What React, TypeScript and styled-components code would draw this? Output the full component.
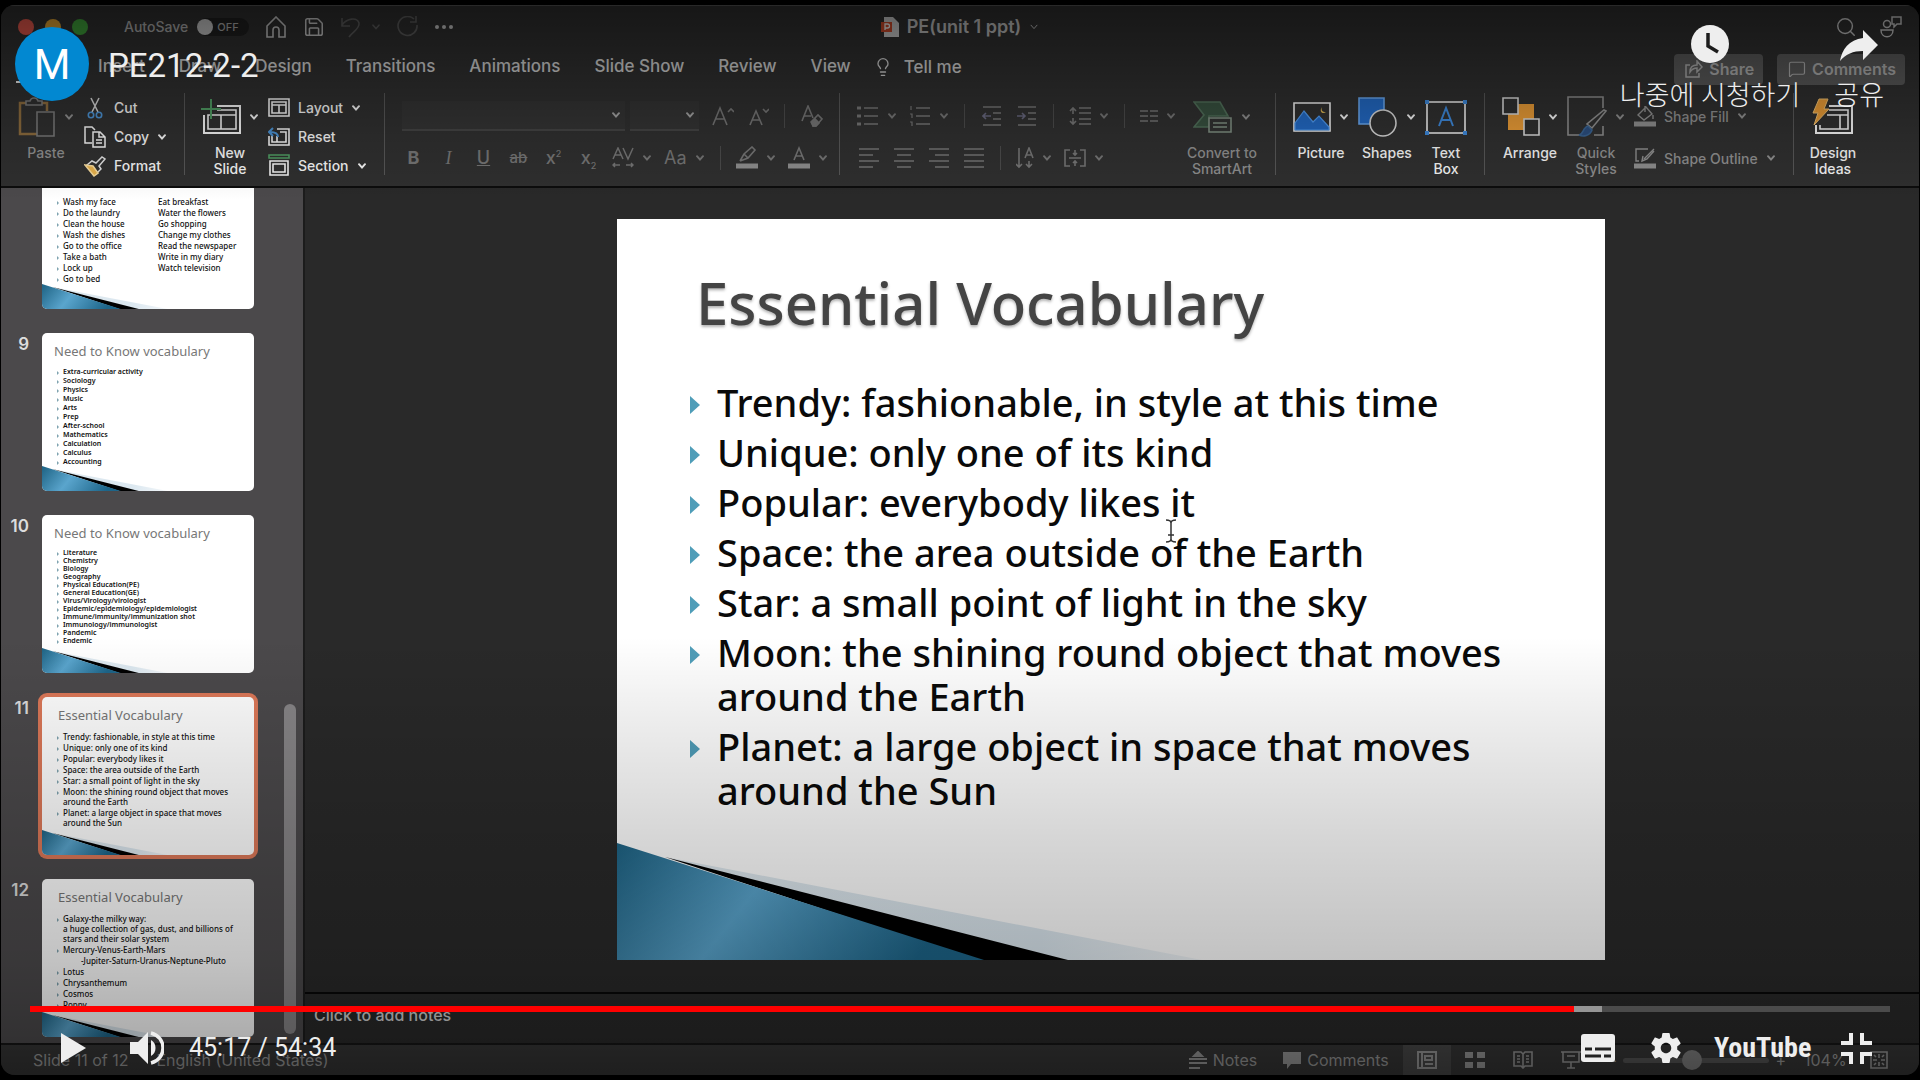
import React from "react";
import styled, { createGlobalStyle, css } from "styled-components";
import { Lightbulb, Search, MessageSquare, Save } from "lucide-react";

const UI = `Inter, "Liberation Sans", sans-serif`;
const SLIDE = `"Noto Sans", "Open Sans", sans-serif`;
const PLAYER = `Roboto, "Noto Sans CJK KR", sans-serif`;

const GlobalStyle = createGlobalStyle`
  *, *::before, *::after { box-sizing: border-box; }
  body { margin: 0; background: #000; font-family: ${UI}; }
  button, input, select, textarea { font: inherit; color: inherit; margin: 0; }
  button { background: none; border: 0; padding: 0; cursor: pointer; }
  ul, ol, h1, h2, p { margin: 0; padding: 0; list-style: none; font-weight: 400; }
  svg { display: block; flex: none; }
`;

const Player = styled.main`
  position: relative;
  height: 100vh;
  min-height: 720px;
  padding: 5px 1px;
  overflow: hidden;
  background: #000;
`;

const AppWindow = styled.div`
  display: flex;
  flex-direction: column;
  height: 100%;
  border-radius: 14px;
  overflow: hidden;
  background: #303030;
  color: #f0f0f0;
`;

/* ---------- title bar ---------- */

const TitleBar = styled.header`
  display: grid;
  grid-template-columns: 1fr auto 1fr;
  align-items: center;
  flex: none;
  height: 43px;
  border-top: 1px solid #555;
  background: #2f2f2f;
`;

const TitleSide = styled.div<{ $end?: boolean }>`
  display: flex;
  align-items: center;
  gap: ${(p) => (p.$end ? 22 : 16)}px;
  padding: ${(p) => (p.$end ? "0 16px 0 0" : "0 0 0 17px")};
  justify-content: ${(p) => (p.$end ? "flex-end" : "flex-start")};
  color: #c4c4c4;
`;

const Lights = styled.div`
  display: flex;
  gap: 11px;
  margin-right: 20px;
`;

const Light = styled.button<{ $c: string }>`
  width: 16px;
  height: 16px;
  border-radius: 50%;
  background: ${(p) => p.$c};
`;

const AutoSave = styled.label`
  display: flex;
  align-items: center;
  gap: 9px;
  font-size: 14px;
  font-weight: 500;
  line-height: 18px;
  color: #a8a8a8;
`;

const Switch = styled.span`
  position: relative;
  display: flex;
  align-items: center;
  width: 52px;
  height: 18px;
  border-radius: 9px;
  background: #1f1f1f;
  font-size: 11px;
  padding-left: 20px;
  input { position: absolute; inset: 0; opacity: 0; }
  &::before {
    content: "";
    position: absolute;
    left: 0;
    width: 16px;
    height: 16px;
    border-radius: 50%;
    background: #c4c4c4;
  }
`;

const IconButton = styled.button<{ $dim?: boolean }>`
  display: flex;
  align-items: center;
  gap: 10px;
  color: ${(p) => (p.$dim ? "#5a5a5a" : "inherit")};
`;

const DocTitle = styled.h1`
  display: flex;
  align-items: center;
  gap: 8px;
  font-size: 18px;
  line-height: 20px;
  font-weight: 600;
  color: #bcbcbc;
`;

/* ---------- tabs ---------- */

const TabBar = styled.nav`
  display: flex;
  align-items: center;
  flex: none;
  height: 41px;
  padding: 0 14px 3px 15px;
  gap: 34px;
  background: #2f2f2f;
`;

const Tab = styled.a<{ $active?: boolean }>`
  font-size: 17px;
  line-height: 30px;
  font-weight: 500;
  color: #d0d0d0;
  text-decoration: none;
  white-space: nowrap;
  border-bottom: 2px solid ${(p) => (p.$active ? "#e8e8e8" : "transparent")};
`;

const TellMe = styled.button`
  display: flex;
  align-items: center;
  gap: 11px;
  margin-left: -12px;
  font-size: 17px;
  line-height: 30px;
  font-weight: 500;
  color: #d0d0d0;
`;

const TabActions = styled.div`
  display: flex;
  gap: 14px;
  margin-left: auto;
  padding-top: 4px;
`;

const ActionButton = styled.button`
  display: flex;
  align-items: center;
  gap: 6px;
  height: 31px;
  padding: 0 9px 0 11px;
  border-radius: 4px;
  background: #585858;
  color: #acacac;
  font-size: 16px;
  font-weight: 600;
`;

/* ---------- ribbon ---------- */

const Ribbon = styled.section`
  display: flex;
  flex: none;
  height: 97px;
  padding-top: 4px;
  background: #2f2f2f;
`;

const Group = styled.div<{ $w?: number; $gap?: number }>`
  position: relative;
  display: flex;
  flex: none;
  gap: ${(p) => p.$gap ?? 10}px;
  width: ${(p) => (p.$w ? p.$w + "px" : "auto")};
  padding-left: 17px;
  &:not(:last-child)::after {
    content: "";
    position: absolute;
    right: 0;
    top: 0;
    width: 1px;
    height: 82px;
    background: #565656;
  }
`;

const tone = css<{ $dim?: boolean }>`
  color: ${(p) => (p.$dim ? "#8c8c8c" : "#f2f2f2")};
`;

const Big = styled.button<{ $dim?: boolean; $w?: number }>`
  ${tone}
  display: flex;
  flex-direction: column;
  align-items: center;
  align-self: flex-start;
  width: ${(p) => p.$w ?? 56}px;
  font-size: 14px;
  line-height: 16px;
  font-weight: 500;
  text-align: center;
`;

const BigIcon = styled.span`
  display: flex;
  align-items: center;
  gap: 8px;
  height: 48px;
  margin-bottom: 4px;
`;

const SmallColumn = styled.div`
  display: flex;
  flex-direction: column;
`;

const Small = styled.button<{ $dim?: boolean; $tall?: boolean }>`
  ${tone}
  display: flex;
  align-items: center;
  gap: 8px;
  height: ${(p) => (p.$tall ? 42 : 29)}px;
  font-size: 14px;
  font-weight: 500;
  white-space: nowrap;
`;

const SmallIcon = styled.span`
  display: flex;
  justify-content: center;
  width: 22px;
`;

const Rows = styled.div<{ $w?: number }>`
  display: flex;
  flex-direction: column;
  flex: none;
  width: ${(p) => (p.$w ? p.$w + "px" : "auto")};
  padding-top: 2px;
`;

const Row = styled.div`
  display: flex;
  align-items: center;
  gap: 12px;
  height: 42px;
`;

const Tool = styled.button`
  display: flex;
  align-items: center;
  justify-content: center;
  gap: 8px;
  min-width: 23px;
  color: #737373;
  font-size: 18px;
  line-height: 22px;
`;

const Glyph = styled.span<{ $v?: "b" | "i" | "u" | "s" }>`
  font-weight: ${(p) => (p.$v === "b" ? 700 : 500)};
  font-style: ${(p) => (p.$v === "i" ? "italic" : "normal")};
  font-family: ${(p) => (p.$v === "i" ? `"Liberation Serif", serif` : UI)};
  text-decoration: ${(p) => (p.$v === "u" ? "underline" : p.$v === "s" ? "line-through" : "none")};
  font-size: ${(p) => (p.$v === "s" ? 15 : 18)}px;
  sup, sub { font-size: 9px; line-height: 0; }
`;

const Sep = styled.span`
  flex: none;
  width: 1px;
  height: 24px;
  margin: 0 3px;
  background: #4a4a4a;
`;

const Pickers = styled.div`
  display: flex;
  gap: 5px;
`;

const Picker = styled.label<{ $w: number }>`
  display: grid;
  align-items: center;
  width: ${(p) => p.$w}px;
  height: 30px;
  background: #333;
  border-bottom: 2px solid #434343;
  select {
    grid-area: 1 / 1;
    appearance: none;
    width: 100%;
    height: 100%;
    border: 0;
    background: transparent;
  }
  svg { grid-area: 1 / 1; justify-self: end; margin-right: 4px; color: #a0a0a0; }
`;

/* ---------- workspace ---------- */

const Workspace = styled.div`
  display: flex;
  flex: 1;
  min-height: 0;
  border-top: 2px solid #0c0c0c;
`;

const Rail = styled.aside`
  position: relative;
  display: flex;
  flex-direction: column;
  justify-content: flex-end;
  gap: 24px;
  flex: none;
  width: 302px;
  padding-bottom: 6px;
  overflow: hidden;
  background: #4b494b;
`;

const RailScroll = styled.span`
  position: absolute;
  right: 7px;
  bottom: 9px;
  width: 12px;
  height: 330px;
  border-radius: 6px;
  background: #878587;
`;

const RailItem = styled.div`
  display: flex;
  flex: none;
`;

const RailNumber = styled.span`
  width: 41px;
  padding-right: 13px;
  text-align: right;
  font-size: 17px;
  line-height: 22px;
  font-weight: 600;
  color: #dcdcdc;
`;

const Thumb = styled.button<{ $on?: boolean }>`
  position: relative;
  display: flex;
  flex-direction: column;
  justify-content: flex-start;
  width: 212px;
  height: 158px;
  border-radius: 5px;
  overflow: hidden;
  background: #fff;
  color: #111;
  text-align: left;
  font-family: ${SLIDE};
  ${(p) => p.$on && "box-shadow: 0 0 0 4px #dc7858;"}
`;

const ThumbTitle = styled.span<{ $in?: boolean }>`
  position: relative;
  padding: 9px 0 0 ${(p) => (p.$in ? 16 : 12)}px;
  height: 34px;
  font-size: 13px;
  line-height: 18px;
  color: #777;
`;

const ThumbList = styled.span<{ $lh: number; $fs: number; $top?: number }>`
  position: relative;
  display: grid;
  align-content: start;
  padding: ${(p) => p.$top ?? 0}px 0 0 15px;
  font-size: ${(p) => p.$fs}px;
  line-height: ${(p) => p.$lh}px;
  font-weight: ${(p) => (p.$fs === 7 ? 600 : 500)};
`;

const ThumbLine = styled.span<{ $kind?: "cont" | "deep"; $cols?: boolean }>`
  display: ${(p) => (p.$cols ? "grid" : "block")};
  grid-template-columns: 95px 1fr;
  position: relative;
  padding-left: ${(p) => (p.$kind === "deep" ? 24 : 6)}px;
  margin-top: ${(p) => (p.$kind === "cont" ? -1 : 0)}px;
  white-space: nowrap;
  ${(p) =>
    !p.$kind &&
    css`
      &::before {
        content: "";
        position: absolute;
        left: 0;
        top: calc(50% - 1px);
        border: solid transparent;
        border-width: 2px 0 2px 2px;
        border-left-color: #7fa3b0;
      }
    `}
`;

const Main = styled.div`
  display: flex;
  flex-direction: column;
  flex: 1;
  min-width: 0;
  border-left: 2px solid #1c1c1c;
  background: #292929;
`;

const Stage = styled.div`
  display: flex;
  flex: 1;
  min-height: 0;
  align-items: center;
  justify-content: center;
  padding: 31px 2px 32px 0;
`;

const Slide = styled.article`
  position: relative;
  height: 100%;
  aspect-ratio: 4 / 3;
  padding: 48px 60px 0 79px;
  background: #fff;
  color: #0a0a0a;
  font-family: ${SLIDE};
`;

const Theme = styled.svg`
  position: absolute;
  inset: 0;
  width: 100%;
  height: 100%;
  pointer-events: none;
`;

const SlideTitle = styled.h2`
  position: relative;
  font-size: 58px;
  line-height: 72px;
  font-weight: 500;
  color: #444;
  text-shadow: 0 2px 3px rgba(0, 0, 0, 0.3);
`;

const Bullets = styled.ul`
  position: relative;
  display: grid;
  gap: 6px;
  margin: 41px 0 0 -6px;
`;

const Bullet = styled.li`
  position: relative;
  padding-left: 27px;
  font-size: 38px;
  line-height: 44px;
  font-weight: 500;
  white-space: pre-line;
  &::before {
    content: "";
    position: absolute;
    left: 0;
    top: 16px;
    border: solid transparent;
    border-width: 9px 0 9px 10px;
    border-left-color: #4f9db8;
  }
`;

const Notes = styled.textarea`
  flex: none;
  height: 51px;
  padding: 11px 9px;
  border: 0;
  border-top: 2px solid #080808;
  resize: none;
  overflow: hidden;
  background: #292929;
  font-size: 16px;
  line-height: 20px;
  font-weight: 500;
  &::placeholder { color: #d0d0d0; opacity: 1; }
`;

/* ---------- status bar ---------- */

const StatusBar = styled.footer`
  display: flex;
  align-items: center;
  flex: none;
  height: 32px;
  padding: 0 31px 0 32px;
  border-top: 2px solid #161616;
  background: #363636;
  color: #989898;
  font-size: 16px;
`;

const StatusText = styled.span`
  margin-right: 28px;
`;

const StatusTools = styled.div`
  display: flex;
  align-items: center;
  align-self: stretch;
  margin-left: auto;
`;

const StatusButton = styled.button`
  display: flex;
  align-items: center;
  gap: 6px;
  margin-right: 14px;
  & + & { margin-left: 12px; }
`;

const ViewButton = styled.button<{ $on?: boolean }>`
  display: flex;
  align-items: center;
  justify-content: center;
  align-self: stretch;
  width: 48px;
  background: ${(p) => (p.$on ? "#484848" : "transparent")};
`;

const Zoom = styled.label`
  display: flex;
  align-items: center;
  gap: 6px;
  margin: 0 26px 0 12px;
  input {
    appearance: none;
    width: 146px;
    height: 21px;
    background: transparent;
  }
  input::-webkit-slider-runnable-track {
    height: 5px;
    border-radius: 3px;
    background: #555;
  }
  input::-webkit-slider-thumb {
    appearance: none;
    width: 20px;
    height: 20px;
    margin-top: -8px;
    border-radius: 50%;
    background: #808080;
  }
  output { width: 40px; margin-left: 12px; }
`;

/* ---------- video player overlay ---------- */

const Shade = styled.div<{ $bottom?: boolean }>`
  position: absolute;
  left: 0;
  right: 0;
  pointer-events: none;
  ${(p) =>
    p.$bottom
      ? "bottom: 0; height: 41vh; background: linear-gradient(rgba(0,0,0,0), rgba(0,0,0,.06) 15%, rgba(0,0,0,.16) 45%, rgba(0,0,0,.24) 73%, rgba(0,0,0,.32) 90%, rgba(0,0,0,.45));"
      : "top: 0; height: 200px; background: linear-gradient(rgba(0,0,0,.54), rgba(0,0,0,.32) 35%, rgba(0,0,0,.12) 70%, rgba(0,0,0,0));"}
`;

const TopOverlay = styled.div`
  position: absolute;
  top: 24px;
  left: 15px;
  right: 36px;
  display: flex;
  color: #eee;
  font-family: ${PLAYER};
`;

const Channel = styled.a`
  display: flex;
  align-items: center;
  justify-content: center;
  width: 74px;
  height: 74px;
  margin-top: 3px;
  border-radius: 50%;
  background: #0288d1;
  color: #fff;
  font-size: 42px;
  text-decoration: none;
`;

const VideoTitle = styled.a`
  margin: 22px auto 0 19px;
  font-size: 33px;
  line-height: 40px;
  color: #eee;
  text-decoration: none;
`;

const TopButton = styled.button`
  display: flex;
  flex-direction: column;
  align-items: center;
  margin-left: 34px;
  font-size: 27px;
  line-height: 30px;
  font-weight: 300;
  gap: 17px;
`;

const BottomOverlay = styled.div`
  position: absolute;
  left: 30px;
  right: 30px;
  bottom: 9px;
  color: #eee;
  font-family: ${PLAYER};
`;

const Progress = styled.input`
  display: block;
  appearance: none;
  width: 100%;
  height: 6px;
  background: linear-gradient(90deg, #f00 83%, #959595 83% 84.5%, #4b4b4b 84.5%);
  &::-webkit-slider-thumb { appearance: none; width: 0; height: 0; }
`;

const Controls = styled.div`
  display: flex;
  align-items: center;
  height: 60px;
  margin-top: 6px;
  padding: 0 18px 0 31px;
  margin-bottom: -7px;
`;

const Control = styled.button<{ $mr: number }>`
  margin-right: ${(p) => p.$mr}px;
`;

const Time = styled.span`
  margin-right: auto;
  font-size: 25px;
  line-height: 30px;
`;

const Wordmark = styled.a`
  width: 96px;
  margin-right: 31px;
  font-family: "Roboto Condensed", "Liberation Sans Narrow", "DejaVu Sans Condensed", sans-serif;
  font-size: 28px;
  line-height: 32px;
  font-weight: 700;
  color: #eee;
  text-decoration: none;
`;

/* ---------- drawings ---------- */

const Chevron = ({ w = 2 }: { w?: number }) => (
  <svg width="10" height="8" viewBox="0 0 10 8" fill="none" stroke="currentColor" strokeWidth={w} strokeLinecap="round">
    <path d="M2 2.2 5 5.6 8 2.2" />
  </svg>
);

type IconProps = { w: number; h: number; sw?: number; children: React.ReactNode };
const Icon = ({ w, h, sw = 1.6, children }: IconProps) => (
  <svg width={w} height={h} viewBox={`0 0 ${w} ${h}`} fill="none" stroke="currentColor" strokeWidth={sw}>
    {children}
  </svg>
);

const SlideArt = () => (
  <Theme viewBox="0 0 988 741" preserveAspectRatio="none">
    <defs>
      <linearGradient id="wave" x1="0" y1="0" x2="1" y2="0.25">
        <stop offset="0" stopColor="#1d6283" />
        <stop offset="0.45" stopColor="#5aa5cd" />
        <stop offset="1" stopColor="#1d6589" />
      </linearGradient>
      <linearGradient id="haze" x1="0" y1="0" x2="1" y2="0">
        <stop offset="0" stopColor="#dfe9ef" />
        <stop offset="0.7" stopColor="#dce8f0" />
        <stop offset="1" stopColor="#f2f6f9" />
      </linearGradient>
    </defs>
    <path d="M48 638 585 741H440Z" fill="url(#haze)" />
    <path d="M48 638 451 741H360Z" fill="#000" />
    <path d="M0 624 367 741H0Z" fill="url(#wave)" />
  </Theme>
);

const PasteIcon = () => (
  <Icon w={38} h={42}>
    <path d="M8 7H2v31h17M24 7h5v8" stroke="#8a6a3c" strokeWidth="2.5" />
    <path d="M8 9V5h4c1-4 7-4 8 0h4v4Z" stroke="#777" />
    <path d="M19 16h17v24H19Z" stroke="#777" />
  </Icon>
);
const CutIcon = () => (
  <Icon w={16} h={22}>
    <path d="M4 1 11 15M12 1 5 15" stroke="#ccc" />
    <circle cx="4" cy="18" r="2.7" stroke="#4a90d0" />
    <circle cx="12" cy="18" r="2.7" stroke="#4a90d0" />
  </Icon>
);
const CopyIcon = () => (
  <Icon w={22} h={22} sw={1.5}>
    <path d="M8 17H1V1h7l3 3M9 6h7l5 5v10H9ZM15 6v5h6M12 14h6M12 17h6" />
  </Icon>
);
const FormatIcon = () => (
  <Icon w={22} h={22} sw={1.5}>
    <path d="m12 8 6-6 3 2-6 7 2 3-5 5-9-9 5-4Z" stroke="#ddd" />
    <path d="m1 10 8 1 5 7-4 3Z" fill="#e5b04c" stroke="#f3d89b" />
  </Icon>
);
const NewSlideIcon = () => (
  <Icon w={40} h={38}>
    <path d="M16 8h23v27H3V17" strokeWidth="2" />
    <path d="M16 12h19v19H7V17h28M20 17v14" />
    <path d="M10 1v20M0 11h20" stroke="#4f9a62" strokeWidth="2" />
  </Icon>
);
const LayoutIcon = () => (
  <Icon w={22} h={20}>
    <path d="M1 1h20v17H1ZM4 4h14v11H4ZM4 7h14M11 7v8" />
  </Icon>
);
const ResetIcon = () => (
  <Icon w={22} h={20}>
    <path d="M9 2h12v16H1V9M12 5h6v10H4V9M9 9v6h9" />
    <path d="M10 10c0-4-3-5-8-5m3-4L1 5l4 4" stroke="#4a90d0" strokeWidth="2" />
  </Icon>
);
const SectionIcon = () => (
  <Icon w={22} h={23}>
    <path d="M1 1h20v3H1Z" stroke="#4f9a62" />
    <path d="M2 7h18v14H2ZM5 10h12v8H5Z" />
  </Icon>
);
const ListIcon = ({ num }: { num?: boolean }) => (
  <Icon w={22} h={20} sw={1.7}>
    <path d="M7 2h14M7 10h14M7 18h14" />
    <path d={num ? "M2 0v4M1 8h2v4M1 16h2v4" : "M0 2h4M0 10h4M0 18h4"} strokeWidth={num ? 1.2 : 3} />
  </Icon>
);
const IndentIcon = ({ out }: { out?: boolean }) => (
  <Icon w={20} h={20} sw={1.6}>
    <path d="M1 1h18M11 7h8M11 13h8M1 19h18" />
    <path d={out ? "M9 10H1m3-3-3 3 3 3" : "M0 10h8M5 7l3 3-3 3"} stroke="#66667c" />
  </Icon>
);
const SpacingIcon = () => (
  <Icon w={22} h={20}>
    <path d="M10 2h12M10 7h12M10 13h12M10 18h12M4 2v6M1 5l3-3 3 3M4 12v6M1 15l3 3 3-3" />
  </Icon>
);
const ColumnsIcon = () => (
  <Icon w={18} h={14} sw={1.4}>
    <path d="M0 2h8M0 7h8M0 12h8M10 2h8M10 7h8M10 12h8" />
  </Icon>
);
const AlignIcon = ({ d }: { d: string }) => (
  <Icon w={20} h={20} sw={1.7}>
    <path d={d} />
  </Icon>
);
const TextDirIcon = () => (
  <Icon w={18} h={22}>
    <path d="M3 1v19M0 17l3 3 3-3M13 14v6M10 17l3 3 3-3M9 11l4-10 4 10M10 8h6" />
  </Icon>
);
const AlignTextIcon = () => (
  <Icon w={22} h={18}>
    <path d="M6 1H1v16h5M16 1h5v16h-5M5 9h12M11 1v5M9 4l2 2 2-2M11 17v-5M9 14l2-2 2 2" />
  </Icon>
);
const SpacingAV = () => (
  <Icon w={22} h={22} sw={1.5}>
    <path d="M1 12 6 1l5 11M3 8h6M11 1l5 11 5-11M1 18h7M3 16l-2 2 2 2M14 18h7M19 16l2 2-2 2" />
  </Icon>
);
const InkIcon = ({ letter }: { letter?: boolean }) => (
  <Icon w={22} h={24}>
    {letter ? <path d="m6 14 5-12 5 12M8 10h6" /> : <path d="M4 15 8 8l8-7 3 3-7 8-8 3M8 8l4 4" />}
    <path d="M0 20h22" stroke="#8c8c8c" strokeWidth="5" />
  </Icon>
);
const SizeIcon = ({ up }: { up?: boolean }) => (
  <Icon w={22} h={20}>
    <path d={up ? "M1 19 8 2l7 17M4 13h8M16 6l3-3 3 3" : "M3 19 9 5l6 14M5 14h8M16 3l3 3 3-3"} />
  </Icon>
);
const ClearIcon = () => (
  <Icon w={22} h={22}>
    <path d="M1 16 7 1l5 12M3 11h7M10 17l7-7 4 4-6 7h-3Z" />
    <path d="m11 17 3-3 4 4-3 3h-3Z" fill="currentColor" />
  </Icon>
);
const SmartArtIcon = () => (
  <Icon w={40} h={32}>
    <path d="M1 1h26l8 14H16v11H1l10-12Z" fill="#37503f" stroke="#4f6d58" />
    <path d="M16 17h22v14H16Z" fill="#303030" stroke="#7d8d80" />
    <path d="M20 22h14M20 26h14" stroke="#7d8d80" />
  </Icon>
);
const PictureIcon = () => (
  <Icon w={38} h={30}>
    <path d="M1 1h36v28H1Z" />
    <path d="m2 21 9-12 9 11 6-6 10 11v3H2Z" fill="#2268c2" stroke="#4d97ec" strokeWidth="1.2" />
    <path d="M29 5c-1 3 0 5 4 5-4 3-7-1-4-5Z" fill="#d7b252" stroke="none" />
  </Icon>
);
const ShapesIcon = () => (
  <Icon w={40} h={40}>
    <path d="M1 1h25v26H1Z" fill="#2268c2" stroke="#68a5ec" />
    <circle cx="25" cy="26" r="13" fill="#303030" stroke="#d4d4d4" />
  </Icon>
);
const TextBoxIcon = () => (
  <Icon w={42} h={36}>
    <path d="M2 3h38v31H2Z" />
    <path d="m14 27 7-18 7 18M16 21h10" stroke="#3d87d8" strokeWidth="2" />
    <path d="M0 1h4v4H0ZM38 1h4v4h-4ZM0 32h4v4H0ZM38 32h4v4h-4Z" fill="#3d87d8" stroke="none" />
  </Icon>
);
const ArrangeIcon = () => (
  <Icon w={38} h={40}>
    <path d="M6 7h26v26H6Z" fill="#e79a36" stroke="none" />
    <path d="M1 1h15v16H1ZM22 22h15v16H22Z" fill="#303030" stroke="#d8d8d8" />
  </Icon>
);
const QuickIcon = () => (
  <Icon w={40} h={42}>
    <path d="M36 12V1H1v38h13M36 30v9h-9" />
    <path d="M39 15 25 32l-5-4 17-14Z" />
    <path d="M12 39c4 0 4-8 9-9l4 4c-2 6-9 7-13 5Z" fill="#2b4d7d" stroke="#38618f" />
  </Icon>
);
const FillIcon = ({ outline }: { outline?: boolean }) => (
  <Icon w={22} h={22} sw={1.4}>
    <path d={outline ? "M14 2H2v12h3M10 12 20 2M9 9l-1 5 5-2 7-8" : "m4 10 8-8 6 7-8 6ZM11 1v6M19 10v4"} />
    <path d="M0 19h22" stroke="#8c8c8c" strokeWidth="5" />
  </Icon>
);
const DesignIcon = () => (
  <Icon w={42} h={38}>
    <path d="M17 8h23v27H4v-8" strokeWidth="2" />
    <path d="M17 12h19v19H8v-4M15 17h21M28 17v14" />
    <path d="M7 1h9l-4 10h5L2 27l4-12H1Z" fill="#e79a36" stroke="#f0c070" strokeWidth="1" />
  </Icon>
);

const ALIGN = [
  ["Align left", "M0 1h20M0 7h14M0 13h20M0 19h14"],
  ["Center", "M0 1h20M3 7h14M0 13h20M3 19h14"],
  ["Align right", "M0 1h20M6 7h14M0 13h20M6 19h14"],
  ["Justify", "M0 1h20M0 7h20M0 13h20M0 19h20"],
];

/* ---------- content ---------- */

type Line = { t: string; u?: string; kind?: "cont" | "deep" };
type ThumbData = { n: string; title: string; inset?: boolean; fs: number; lh: number; top?: number; on?: boolean; lines: Line[] };
const b = (...ts: string[]): Line[] => ts.map((t) => ({ t }));

const THUMBS: ThumbData[] = [
  {
    n: "", title: "", fs: 8, lh: 11, top: 11,
    lines: [
      { t: "Wash my face", u: "Eat breakfast" },
      { t: "Do the laundry", u: "Water the flowers" },
      { t: "Clean the house", u: "Go shopping" },
      { t: "Wash the dishes", u: "Change my clothes" },
      { t: "Go to the office", u: "Read the newspaper" },
      { t: "Take a bath", u: "Write in my diary" },
      { t: "Lock up", u: "Watch television" },
      { t: "Go to bed" },
    ],
  },
  {
    n: "9", title: "Need to Know vocabulary", fs: 7, lh: 9,
    lines: b("Extra-curricular activity", "Sociology", "Physics", "Music", "Arts", "Prep", "After-school", "Mathematics", "Calculation", "Calculus", "Accounting"),
  },
  {
    n: "10", title: "Need to Know vocabulary", fs: 7, lh: 8,
    lines: b("Literature", "Chemistry", "Biology", "Geography", "Physical Education(PE)", "General Education(GE)", "Virus/Virology/virologist", "Epidemic/epidemiology/epidemiologist", "Immune/immunity/immunization shot", "Immunology/immunologist", "Pandemic", "Endemic"),
  },
  {
    n: "11", title: "Essential Vocabulary", inset: true, fs: 8, lh: 11, on: true,
    lines: [
      ...b("Trendy: fashionable, in style at this time", "Unique: only one of its kind", "Popular: everybody likes it", "Space: the area outside of the Earth", "Star: a small point of light in the sky", "Moon: the shining round object that moves"),
      { t: "around the Earth", kind: "cont" },
      { t: "Planet: a large object in space that moves" },
      { t: "around the Sun", kind: "cont" },
    ],
  },
  {
    n: "12", title: "Essential Vocabulary", inset: true, fs: 8, lh: 11,
    lines: [
      { t: "Galaxy-the milky way:" },
      { t: "a huge collection of gas, dust, and billions of", kind: "cont" },
      { t: "stars and their solar system", kind: "cont" },
      { t: "Mercury-Venus-Earth-Mars" },
      { t: "-Jupiter-Saturn-Uranus-Neptune-Pluto", kind: "deep" },
      ...b("Lotus", "Chrysanthemum", "Cosmos", "Poppy"),
    ],
  },
];

const BULLETS = [
  "Trendy: fashionable, in style at this time",
  "Unique: only one of its kind",
  "Popular: everybody likes it",
  "Space: the area outside of the Earth",
  "Star: a small point of light in the sky",
  "Moon: the shining round object that moves\naround the Earth",
  "Planet: a large object in space that moves\naround the Sun",
];

const TABS = ["Home", "Insert", "Draw", "Design", "Transitions", "Animations", "Slide Show", "Review", "View"];

export default function App() {
  return (
    <Player>
      <GlobalStyle />
      <AppWindow>
        <TitleBar>
          <TitleSide>
            <Lights>
              <Light $c="#e0564a" aria-label="Close" />
              <Light $c="#dca032" aria-label="Minimize" />
              <Light $c="#3fa03a" aria-label="Zoom window" />
            </Lights>
            <AutoSave>
              AutoSave
              <Switch><input type="checkbox" />OFF</Switch>
            </AutoSave>
            <IconButton aria-label="Home">
              <Icon w={22} h={22}><path d="M2 10 11 1l9 9v11h-6v-7c0-4-6-4-6 0v7H2Z" /></Icon>
            </IconButton>
            <IconButton aria-label="Save"><Save size={22} strokeWidth={1.7} /></IconButton>
            <IconButton $dim aria-label="Undo">
              <Icon w={20} h={22}><path d="M1 2v8h8M1 9C6 2 16 1 18 7c1 6-7 9-10 14" /></Icon>
              <Chevron w={1.6} />
            </IconButton>
            <IconButton $dim aria-label="Redo">
              <Icon w={22} h={22}><path d="M17 3A9.500 9.500 0 1 0 20 9M19 0v6h-6" /></Icon>
            </IconButton>
            <IconButton aria-label="More">
              <svg width="18" height="4" viewBox="0 0 18 4" fill="currentColor">
                <circle cx="2" cy="2" r="2" /><circle cx="9" cy="2" r="2" /><circle cx="16" cy="2" r="2" />
              </svg>
            </IconButton>
          </TitleSide>
          <DocTitle>
            <svg width="18" height="20" viewBox="0 0 18 20">
              <path d="M3 0h9l6 6v14H3Z" fill="#c8c8c8" />
              <path d="M0 5h11v10H0Z" fill="#c8492a" />
              <path d="M4 13V7h2.500a1.800 1.800 0 0 1 0 4H4" fill="none" stroke="#eee" strokeWidth="1.300" />
            </svg>
            PE(unit 1 ppt)
            <Chevron w={1} />
          </DocTitle>
          <TitleSide $end>
            <IconButton aria-label="Search"><Search size={22} strokeWidth={1.6} /></IconButton>
            <IconButton aria-label="Account">
              <Icon w={24} h={24} sw={1.5}>
                <circle cx="8" cy="9" r="3.500" /><path d="M2 15h12c0 9-12 9-12 0ZM13 2h9v7h-4l-3 3V9h-2Z" />
              </Icon>
            </IconButton>
          </TitleSide>
        </TitleBar>

        <TabBar>
          {TABS.map((t) => <Tab key={t} href="#" $active={t === "Home"}>{t}</Tab>)}
          <TellMe><Lightbulb size={20} strokeWidth={1.6} />Tell me</TellMe>
          <TabActions>
            <ActionButton>
              <Icon w={18} h={18} sw={1.5}><path d="M5 5H1v12h13v-4M5 12c0-5 3-7 7-7V1l5 6-5 5V8c-3 0-5 1-7 4Z" /></Icon>
              Share
            </ActionButton>
            <ActionButton><MessageSquare size={18} strokeWidth={1.6} />Comments</ActionButton>
          </TabActions>
        </TabBar>

        <Ribbon>
          <Group $w={184} $gap={10}>
            <Big $dim><BigIcon><PasteIcon /><Chevron /></BigIcon>Paste</Big>
            <SmallColumn>
              <Small><SmallIcon><CutIcon /></SmallIcon>Cut</Small>
              <Small><SmallIcon><CopyIcon /></SmallIcon>Copy<Chevron /></Small>
              <Small><SmallIcon><FormatIcon /></SmallIcon>Format</Small>
            </SmallColumn>
          </Group>
          <Group $w={200}>
            <Big><BigIcon><NewSlideIcon /><Chevron /></BigIcon>New<br />Slide</Big>
            <SmallColumn>
              <Small><SmallIcon><LayoutIcon /></SmallIcon>Layout<Chevron /></Small>
              <Small><SmallIcon><ResetIcon /></SmallIcon>Reset</Small>
              <Small><SmallIcon><SectionIcon /></SmallIcon>Section<Chevron /></Small>
            </SmallColumn>
          </Group>
          <Group $w={455}>
            <Rows>
              <Row>
                <Pickers>
                  <Picker $w={223}><select aria-label="Font" /><Chevron /></Picker>
                  <Picker $w={69}><select aria-label="Font size" /><Chevron /></Picker>
                </Pickers>
                <Tool aria-label="Grow font"><SizeIcon up /></Tool>
                <Tool aria-label="Shrink font"><SizeIcon /></Tool>
                <Sep />
                <Tool aria-label="Clear formatting"><ClearIcon /></Tool>
              </Row>
              <Row>
                <Tool><Glyph $v="b">B</Glyph></Tool>
                <Tool><Glyph $v="i">I</Glyph></Tool>
                <Tool><Glyph $v="u">U</Glyph></Tool>
                <Tool><Glyph $v="s">ab</Glyph></Tool>
                <Tool><Glyph>x<sup>2</sup></Glyph></Tool>
                <Tool><Glyph>x<sub>2</sub></Glyph></Tool>
                <Tool aria-label="Character spacing"><SpacingAV /><Chevron /></Tool>
                <Tool>Aa<Chevron /></Tool>
                <Sep />
                <Tool aria-label="Highlight"><InkIcon /><Chevron /></Tool>
                <Tool aria-label="Font color"><InkIcon letter /><Chevron /></Tool>
              </Row>
            </Rows>
          </Group>
          <Group $w={436} $gap={0}>
            <Rows $w={328}>
              <Row>
                <Tool aria-label="Bullets"><ListIcon /><Chevron /></Tool>
                <Tool aria-label="Numbering"><ListIcon num /><Chevron /></Tool>
                <Sep />
                <Tool aria-label="Decrease indent"><IndentIcon out /></Tool>
                <Tool aria-label="Increase indent"><IndentIcon /></Tool>
                <Sep />
                <Tool aria-label="Line spacing"><SpacingIcon /><Chevron /></Tool>
                <Sep />
                <Tool aria-label="Columns"><ColumnsIcon /><Chevron /></Tool>
              </Row>
              <Row>
                {ALIGN.map(([name, d]) => <Tool key={name} aria-label={name}><AlignIcon d={d} /></Tool>)}
                <Sep />
                <Tool aria-label="Text direction"><TextDirIcon /><Chevron /></Tool>
                <Tool aria-label="Align text"><AlignTextIcon /><Chevron /></Tool>
              </Row>
            </Rows>
            <Big $dim $w={74}><BigIcon><SmartArtIcon /><Chevron /></BigIcon>Convert to SmartArt</Big>
          </Group>
          <Group $w={209}>
            <Big><BigIcon><PictureIcon /><Chevron /></BigIcon>Picture</Big>
            <Big><BigIcon><ShapesIcon /><Chevron /></BigIcon>Shapes</Big>
            <Big $w={42}><BigIcon><TextBoxIcon /></BigIcon>Text<br />Box</Big>
          </Group>
          <Group $w={309}>
            <Big><BigIcon><ArrangeIcon /><Chevron /></BigIcon>Arrange</Big>
            <Big $dim><BigIcon><QuickIcon /><Chevron /></BigIcon>Quick<br />Styles</Big>
            <Rows>
              <Small $dim $tall><SmallIcon><FillIcon /></SmallIcon>Shape Fill<Chevron /></Small>
              <Small $dim $tall><SmallIcon><FillIcon outline /></SmallIcon>Shape Outline<Chevron /></Small>
            </Rows>
          </Group>
          <Group>
            <Big $w={44}><BigIcon><DesignIcon /></BigIcon>Design<br />Ideas</Big>
          </Group>
        </Ribbon>

        <Workspace>
          <Rail>
            {THUMBS.map((s, i) => (
              <RailItem key={i}>
                <RailNumber>{s.n}</RailNumber>
                <Thumb $on={s.on}>
                  <SlideArt />
                  <ThumbTitle $in={s.inset}>{s.title}</ThumbTitle>
                  <ThumbList $fs={s.fs} $lh={s.lh} $top={s.top}>
                    {s.lines.map((l) => (
                      <ThumbLine key={l.t} $kind={l.kind} $cols={!!l.u}>
                        <span>{l.t}</span>
                        {l.u && <span>{l.u}</span>}
                      </ThumbLine>
                    ))}
                  </ThumbList>
                </Thumb>
              </RailItem>
            ))}
            <RailScroll />
          </Rail>
          <Main>
            <Stage>
              <Slide>
                <SlideArt />
                <SlideTitle>Essential Vocabulary</SlideTitle>
                <Bullets>
                  {BULLETS.map((t) => <Bullet key={t}>{t}</Bullet>)}
                </Bullets>
                <Theme viewBox="0 0 988 741" fill="none" stroke="#333" strokeWidth="1.500">
                  <path d="M549 301c3 0 5 1 5 3v16c0 2-2 3-5 3M559 301c-3 0-5 1-5 3v16c0 2 2 3 5 3M551 316h6" />
                </Theme>
              </Slide>
            </Stage>
            <Notes aria-label="Notes" placeholder="Click to add notes" />
          </Main>
        </Workspace>

        <StatusBar>
          <StatusText>Slide 11 of 12</StatusText>
          <StatusText>English (United States)</StatusText>
          <StatusTools>
            <StatusButton>
              <Icon w={18} h={18} sw={2}><path d="M0 8h18M0 12h18M0 17h11" /><path d="m5 5 4-4 4 4Z" fill="currentColor" /></Icon>
              Notes
            </StatusButton>
            <StatusButton>
              <svg width="18" height="17" viewBox="0 0 18 17" fill="currentColor"><path d="M0 0h18v12H8l-4 5v-5H0Z" /></svg>
              Comments
            </StatusButton>
            <ViewButton $on aria-label="Normal view">
              <Icon w={20} h={18} sw={2}><path d="M1 1h18v16H1ZM5 1v16M8 5h7v4H8ZM8 13h8" /></Icon>
            </ViewButton>
            <ViewButton aria-label="Slide sorter">
              <svg width="20" height="16" viewBox="0 0 20 16" fill="currentColor"><path d="M0 0h8v6H0ZM12 0h8v6h-8ZM0 10h8v6H0ZM12 10h8v6h-8Z" /></svg>
            </ViewButton>
            <ViewButton aria-label="Reading view">
              <Icon w={20} h={18}><path d="M10 3 8 1H1v14h7l2 2 2-2h7V1h-7ZM10 3v14M4 5h3M4 8h3M4 11h3M13 5h3M13 8h3M13 11h3" /></Icon>
            </ViewButton>
            <ViewButton aria-label="Slide show">
              <Icon w={20} h={18}><path d="M0 1h20M2 1v10h16V1M10 11v6M6 17h8M6 5h8" /></Icon>
            </ViewButton>
            <Zoom>
              −<input type="range" min="10" max="200" defaultValue="98" aria-label="Zoom" />+
              <output>104%</output>
            </Zoom>
            <IconButton aria-label="Fit slide">
              <Icon w={18} h={18}><path d="M1 1h16v16H1ZM9 3v4M9 11v4M3 9h4M11 9h4M4 4l2 2M14 4l-2 2M4 14l2-2M14 14l-2-2" /></Icon>
            </IconButton>
          </StatusTools>
        </StatusBar>
      </AppWindow>

      <Shade />
      <Shade $bottom />

      <TopOverlay>
        <Channel href="#">M</Channel>
        <VideoTitle href="#">PE212-2-2</VideoTitle>
        <TopButton>
          <svg width="38" height="40" viewBox="0 0 38 40">
            <ellipse cx="19" cy="20" rx="19" ry="19" fill="#eee" />
            <path d="M17 9v13l10 6" fill="none" stroke="#1c1c1c" strokeWidth="3.500" />
          </svg>
          나중에 시청하기
        </TopButton>
        <TopButton>
          <svg width="40" height="40" viewBox="0 0 40 40"><path d="M24 6 39 21 24 36v-9C14 27 7 30 1 37 3 25 10 16 24 14Z" fill="#eee" /></svg>
          공유
        </TopButton>
      </TopOverlay>

      <BottomOverlay>
        <Progress type="range" min="0" max="3274" defaultValue="2717" aria-label="Seek" />
        <Controls>
          <Control $mr={44} aria-label="Play">
            <svg width="25" height="30" viewBox="0 0 25 30"><path d="M0 0 25 15 0 30Z" fill="#eee" /></svg>
          </Control>
          <Control $mr={25} aria-label="Mute">
            <svg width="34" height="34" viewBox="0 0 34 34" fill="#eee">
              <path d="M0 11h8L18 1v32L8 23H0ZM21 9c6 3 6 13 0 16Z" />
              <path d="M21 2c16 4 16 26 0 30" fill="none" stroke="#eee" strokeWidth="3.500" />
            </svg>
          </Control>
          <Time>45:17 / 54:34</Time>
          <Control $mr={36} aria-label="Subtitles">
            <svg width="34" height="28" viewBox="0 0 34 28">
              <rect width="34" height="28" rx="3" fill="#eee" />
              <path d="M4 15h7M14 15h16M4 22h16M23 22h7" stroke="#222" strokeWidth="3" />
            </svg>
          </Control>
          <Control $mr={33} aria-label="Settings">
            <svg width="30" height="30" viewBox="2 2 20 20" fill="#eee">
              <path d="M19.430 12.980c.04-.32.07-.64.07-.98s-.03-.66-.07-.98l2.110-1.650c.19-.15.24-.42.12-.64l-2-3.460c-.12-.22-.39-.3-.61-.22l-2.490 1c-.52-.4-1.080-.73-1.690-.98l-.38-2.650C14.460 2.180 14.250 2 14 2h-4c-.25 0-.46.18-.49.42l-.38 2.650c-.61.25-1.170.59-1.690.98l-2.490-1c-.23-.09-.49 0-.61.22l-2 3.460c-.13.22-.07.49.12.64l2.110 1.650c-.04.32-.07.65-.07.98s.03.66.07.98l-2.110 1.650c-.19.15-.24.42-.12.64l2 3.460c.12.22.39.3.61.22l2.490-1c.52.4 1.080.73 1.690.98l.38 2.650c.03.24.24.42.49.42h4c.25 0 .46-.18.49-.42l.38-2.650c.61-.25 1.170-.59 1.690-.98l2.490 1c.23.09.49 0 .61-.22l2-3.460c.12-.22.07-.49-.12-.64ZM12 15.500c-1.930 0-3.500-1.570-3.500-3.500s1.570-3.500 3.500-3.500 3.500 1.570 3.500 3.500-1.570 3.500-3.500 3.500Z" />
            </svg>
          </Control>
          <Wordmark href="#">YouTube</Wordmark>
          <Control $mr={0} aria-label="Exit full screen">
            <svg width="31" height="31" viewBox="0 0 31 31" fill="none" stroke="#eee" strokeWidth="4">
              <path d="M0 10h10V0M21 0v10h10M0 21h10v10M21 31V21h10" />
            </svg>
          </Control>
        </Controls>
      </BottomOverlay>
    </Player>
  );
}
